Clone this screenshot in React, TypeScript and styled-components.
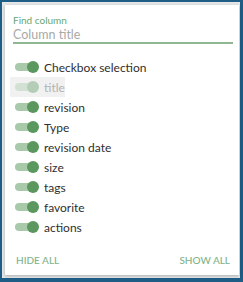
import React from "react";
import styled, { createGlobalStyle } from "styled-components";

const Global = createGlobalStyle`
  html, body { margin: 0; padding: 0; }
  body {
    background: #1d5d86;
    width: 243px;
    height: 282px;
    overflow: hidden;
    font-family: Lato, "Open Sans", sans-serif;
  }
`;

const Frame = styled.div`
  margin: 2px 0 0 2px;
  width: 238px;
  height: 276px;
  background: #e4e6e7;
  display: flex;
  padding: 3px 0 0 3px;
  box-sizing: border-box;
`;

const Panel = styled.div`
  width: 234px;
  height: 270px;
  background: #fff;
  box-shadow: 0 1px 3px rgba(0, 0, 0, 0.25);
  display: flex;
  flex-direction: column;
  box-sizing: border-box;
  padding: 9px 6px 0 8px;
`;

const Field = styled.div`
  display: flex;
  flex-direction: column;
`;

const Label = styled.label`
  font-size: 10px;
  color: #6aa66f;
  line-height: 13px;
`;

const Input = styled.input`
  border: none;
  outline: none;
  border-bottom: 2px solid #8fb892;
  font-family: Lato, sans-serif;
  font-size: 12.5px;
  line-height: 15px;
  height: 17px;
  color: #333;
  padding: 0;
  margin: 0;
  width: 100%;
  box-sizing: border-box;
  &::placeholder { color: #a9a9a9; }
`;

const List = styled.div`
  display: flex;
  flex-direction: column;
  margin: 13px 0 0 -3px;
`;

const Row = styled.div<{ $faded?: boolean }>`
  display: flex;
  align-items: center;
  height: 20px;
  gap: 5px;
  padding-left: 5px;
  width: ${(p) => (p.$faded ? "55px" : "auto")};
  background: ${(p) => (p.$faded ? "#f1f1f1" : "transparent")};
  box-sizing: border-box;
`;

const Switch = styled.span<{ $faded?: boolean }>`
  position: relative;
  width: 24px;
  height: 12px;
  flex: none;
  display: flex;
  align-items: center;
  opacity: ${(p) => (p.$faded ? 0.4 : 1)};
`;

const Track = styled.span`
  width: 20px;
  height: 8px;
  border-radius: 4px;
  background: #a8c9aa;
`;

const Thumb = styled.span`
  position: absolute;
  right: 0;
  top: 0;
  width: 12px;
  height: 12px;
  border-radius: 50%;
  background: #5a985f;
`;

const Name = styled.span<{ $faded?: boolean }>`
  font-size: 12px;
  color: ${(p) => (p.$faded ? "#b3b3b3" : "#2f2f2f")};
  white-space: nowrap;
`;

const Footer = styled.div`
  margin-top: auto;
  display: flex;
  justify-content: space-between;
  padding: 0 3px 9px 3px;
`;

const Action = styled.button`
  background: none;
  border: none;
  padding: 0;
  font-family: Lato, sans-serif;
  font-size: 10px;
  font-weight: 500;
  color: #80b388;
  text-transform: uppercase;
  cursor: pointer;
`;

const columns = [
  "Checkbox selection",
  "title",
  "revision",
  "Type",
  "revision date",
  "size",
  "tags",
  "favorite",
  "actions",
];

export default function App() {
  return (
    <>
      <Global />
      <Frame>
        <Panel>
          <Field>
            <Label>Find column</Label>
            <Input placeholder="Column title" />
          </Field>
          <List>
            {columns.map((c) => {
              const faded = c === "title";
              return (
                <Row key={c} $faded={faded}>
                  <Switch $faded={faded}>
                    <Track />
                    <Thumb />
                  </Switch>
                  <Name $faded={faded}>{c}</Name>
                </Row>
              );
            })}
          </List>
          <Footer>
            <Action>Hide all</Action>
            <Action>Show all</Action>
          </Footer>
        </Panel>
      </Frame>
    </>
  );
}
